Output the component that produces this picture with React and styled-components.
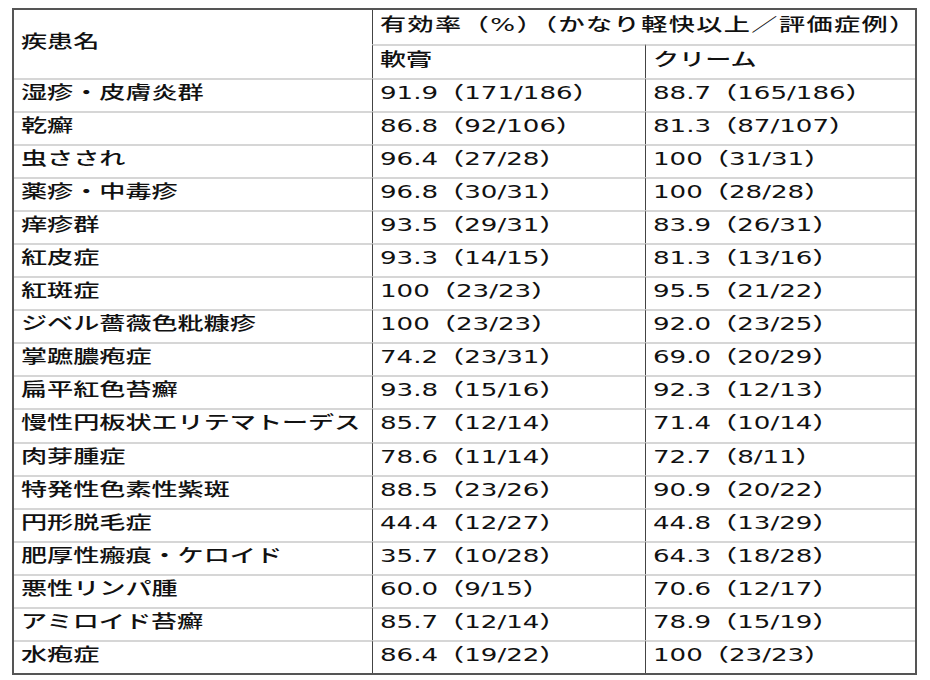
import React from "react";
import styled, { createGlobalStyle } from "styled-components";

const GlobalStyle = createGlobalStyle`
  html, body {
    margin: 0;
    padding: 0;
    background: #fff;
  }
  body {
    font-family: "DejaVu Sans", "Noto Sans CJK JP", sans-serif;
    color: #111;
  }
`;

const rows = [
  ["湿疹・皮膚炎群", "91.9（171/186）", "88.7（165/186）"],
  ["乾癬", "86.8（92/106）", "81.3（87/107）"],
  ["虫さされ", "96.4（27/28）", "100（31/31）"],
  ["薬疹・中毒疹", "96.8（30/31）", "100（28/28）"],
  ["痒疹群", "93.5（29/31）", "83.9（26/31）"],
  ["紅皮症", "93.3（14/15）", "81.3（13/16）"],
  ["紅斑症", "100（23/23）", "95.5（21/22）"],
  ["ジベル薔薇色粃糠疹", "100（23/23）", "92.0（23/25）"],
  ["掌蹠膿疱症", "74.2（23/31）", "69.0（20/29）"],
  ["扁平紅色苔癬", "93.8（15/16）", "92.3（12/13）"],
  ["慢性円板状エリテマトーデス", "85.7（12/14）", "71.4（10/14）"],
  ["肉芽腫症", "78.6（11/14）", "72.7（8/11）"],
  ["特発性色素性紫斑", "88.5（23/26）", "90.9（20/22）"],
  ["円形脱毛症", "44.4（12/27）", "44.8（13/29）"],
  ["肥厚性瘢痕・ケロイド", "35.7（10/28）", "64.3（18/28）"],
  ["悪性リンパ腫", "60.0（9/15）", "70.6（12/17）"],
  ["アミロイド苔癬", "85.7（12/14）", "78.9（15/19）"],
  ["水疱症", "86.4（19/22）", "100（23/23）"],
];

const Page = styled.div`
  padding: 8px 0 0 12px;
`;

const Table = styled.table`
  border-collapse: separate;
  border-spacing: 0;
  table-layout: fixed;
  width: 905px;
  border: 2px solid #555;
`;

const Cell = styled.td`
  height: ${(p) => (p.$head ? "34px" : "33.05px")};
  padding: 0 0 5px 7px;
  box-sizing: border-box;
  vertical-align: middle;
  text-align: left;
  font-size: 18px;
  font-weight: 500;
  line-height: 1;
  letter-spacing: ${(p) => (p.$wide ? "1px" : "0")};
  white-space: nowrap;
  border-top: ${(p) => (p.$top ? "none" : "2px solid #d6d6d6")};
  border-left: ${(p) => (p.$first ? "none" : "1.5px solid #444")};
`;

const Stretch = styled.span`
  display: inline-block;
  transform: scaleX(1.45);
  transform-origin: 0 50%;
`;

export default function App() {
  return (
    <>
      <GlobalStyle />
      <Page>
        <Table>
          <colgroup>
            <col style={{ width: 358 }} />
            <col style={{ width: 273 }} />
            <col />
          </colgroup>
          <thead>
            <tr>
              <Cell as="th" rowSpan={2} $head $top $first>
                <Stretch>疾患名</Stretch>
              </Cell>
              <Cell as="th" colSpan={2} $head $top $wide>
                <Stretch>有効率（%）（かなり軽快以上／評価症例）</Stretch>
              </Cell>
            </tr>
            <tr>
              <Cell as="th" $head>
                <Stretch>軟膏</Stretch>
              </Cell>
              <Cell as="th" $head>
                <Stretch>クリーム</Stretch>
              </Cell>
            </tr>
          </thead>
          <tbody>
            {rows.map(([name, ointment, cream]) => (
              <tr key={name}>
                <Cell $first>
                  <Stretch>{name}</Stretch>
                </Cell>
                <Cell>
                  <Stretch>{ointment}</Stretch>
                </Cell>
                <Cell>
                  <Stretch>{cream}</Stretch>
                </Cell>
              </tr>
            ))}
          </tbody>
        </Table>
      </Page>
    </>
  );
}
